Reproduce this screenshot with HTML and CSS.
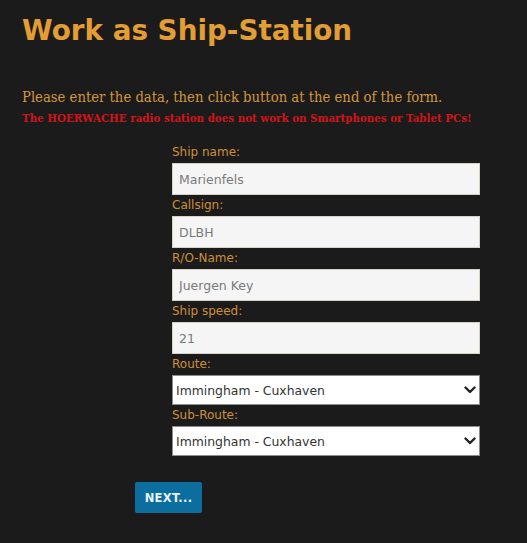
FILE: index.html
```html
<!DOCTYPE html>
<html>
<head>
<meta charset="utf-8">
<link rel="stylesheet" href="styles.css">
</head>
<body>
<h1 class="title">Work as Ship-Station</h1>
<p class="intro">Please enter the data, then click button at the end of the form.</p>
<p class="warning">The HOERWACHE radio station does not work on Smartphones or Tablet PCs!</p>
<form class="form">
  <div class="fields">
    <label class="label">Ship name:</label>
    <input class="input" type="text" value="Marienfels">
    <label class="label">Callsign:</label>
    <input class="input" type="text" value="DLBH">
    <label class="label">R/O-Name:</label>
    <input class="input" type="text" value="Juergen Key">
    <label class="label">Ship speed:</label>
    <input class="input" type="text" value="21">
    <label class="label">Route:</label>
    <div class="select-wrap">
      <select class="select"><option>Immingham - Cuxhaven</option></select>
      <svg class="chevron" width="12" height="8" viewBox="0 0 12 8"><path d="M1.5 1.5 L6 6 L10.5 1.5" fill="none" stroke="#222" stroke-width="2.4" stroke-linecap="round" stroke-linejoin="round"/></svg>
    </div>
    <label class="label">Sub-Route:</label>
    <div class="select-wrap">
      <select class="select"><option>Immingham - Cuxhaven</option></select>
      <svg class="chevron" width="12" height="8" viewBox="0 0 12 8"><path d="M1.5 1.5 L6 6 L10.5 1.5" fill="none" stroke="#222" stroke-width="2.4" stroke-linecap="round" stroke-linejoin="round"/></svg>
    </div>
  </div>
  <button class="button" type="button">NEXT...</button>
</form>
</body>
</html>
```
FILE: styles.css
```css
html, body {
  background: #1b1b1b;
}
body {
  margin: 0;
  padding: 0 22px;
}
.title {
  margin: 13px 0 0;
  font-family: "DejaVu Sans", sans-serif;
  font-weight: bold;
  font-size: 27.8px;
  line-height: 36px;
  color: #e39d35;
}
.intro {
  margin: 38px 0 0;
  font-family: "DejaVu Serif", serif;
  font-stretch: semi-condensed;
  font-size: 14.7px;
  line-height: 20px;
  color: #d3973f;
}
.warning {
  margin: 2px 0 0;
  font-family: "DejaVu Serif", serif;
  font-stretch: semi-condensed;
  font-weight: bold;
  font-size: 11.45px;
  line-height: 18px;
  color: #d2141a;
  white-space: nowrap;
}
.form {
  margin-top: 15px;
}
.fields {
  display: flex;
  flex-direction: column;
  margin-left: 150px;
  width: 308px;
}
.label {
  display: block;
  height: 21px;
  line-height: 21px;
  font-family: "DejaVu Sans", sans-serif;
  font-size: 12px;
  color: #cf8f3a;
}
.input {
  box-sizing: border-box;
  height: 32px;
  width: 308px;
  margin: 0;
  padding: 0 6px;
  border: 1px solid #d8d2c4;
  background: #f5f5f5;
  font-family: "DejaVu Sans", sans-serif;
  font-size: 12.5px;
  color: #7a7a7a;
  outline: none;
}
.select-wrap {
  position: relative;
  width: 308px;
  height: 30px;
}
.select {
  appearance: none;
  -webkit-appearance: none;
  box-sizing: border-box;
  width: 308px;
  height: 30px;
  margin: 0;
  padding: 0 3px;
  border: 1px solid #8c8c8c;
  border-radius: 0;
  background: #ffffff;
  font-family: "DejaVu Sans", sans-serif;
  font-size: 12.4px;
  color: #333;
}
.chevron {
  position: absolute;
  right: 4px;
  top: 11px;
  pointer-events: none;
}
.button {
  margin: 26px 0 0 113px;
  width: 67px;
  height: 31px;
  padding: 0;
  border: none;
  border-radius: 2px;
  background: #0b6e9f;
  color: #eaf4fa;
  font-family: "DejaVu Sans", sans-serif;
  font-weight: bold;
  font-size: 11.5px;
  letter-spacing: 0.3px;
}
```
